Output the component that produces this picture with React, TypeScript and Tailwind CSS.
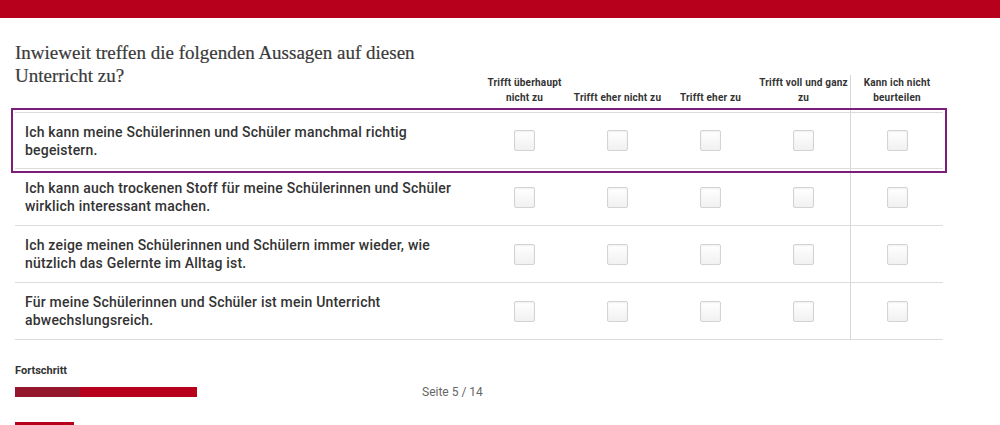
import React from 'react';

const columns: string[][] = [
  ['Trifft überhaupt', 'nicht zu'],
  ['Trifft eher nicht zu'],
  ['Trifft eher zu'],
  ['Trifft voll und ganz', 'zu'],
  ['Kann ich nicht', 'beurteilen'],
];

const statements = [
  'Ich kann meine Schülerinnen und Schüler manchmal richtig begeistern.',
  'Ich kann auch trockenen Stoff für meine Schülerinnen und Schüler wirklich interessant machen.',
  'Ich zeige meinen Schülerinnen und Schülern immer wieder, wie nützlich das Gelernte im Alltag ist.',
  'Für meine Schülerinnen und Schüler ist mein Unterricht abwechslungsreich.',
];

const Checkbox: React.FC = () => (
  <span className="block w-[21px] h-[21px] border border-[#d3d3d3] rounded-[2px] bg-gradient-to-b from-white to-[#f1f1f1] shadow-[inset_0_1px_2px_rgba(0,0,0,0.06)]" />
);

export default function App() {
  return (
    <div className="w-[1000px] h-[425px] overflow-hidden bg-white font-['Roboto',sans-serif] text-[#333]">
      {/* Top bar */}
      <div className="h-[18px] bg-[#b7001b]" />

      <div className="w-[928px] ml-[15px]">
        {/* Header */}
        <div className="grid grid-cols-[463px_repeat(5,93px)] h-[94px]">
          <h1 className="self-start pt-[23px] font-['Liberation_Serif',serif] text-[19px] leading-[23px] text-[#3a3a3a] [-webkit-text-stroke:0.2px_#3a3a3a]">
            Inwieweit treffen die folgenden Aussagen auf diesen
            <br />
            Unterricht zu?
          </h1>
          {columns.map((lines, i) => (
            <div
              key={i}
              className={`flex flex-col items-center justify-end text-center pb-[10px] text-[10px] leading-[15px] font-bold tracking-[0.2px] ${
                i === 4 ? 'border-l border-[#d6d6d6] mt-[57px]' : ''
              }`}
            >
              {lines.map((l) => (
                <span key={l} className="whitespace-nowrap">{l}</span>
              ))}
            </div>
          ))}
        </div>

        {/* Rows */}
        {statements.map((text, r) => (
          <div
            key={r}
            className={`grid grid-cols-[463px_repeat(5,93px)] border-b border-[#dcdcdc] ${
              r === 0
                ? 'h-[57px] border-t outline-2 outline-[#7b1e7a] outline-offset-2 [outline-style:solid]'
                : 'h-[57px]'
            }`}
          >
            <div className="flex items-center pl-[10px] pr-[20px] text-[14px] leading-[18px] font-medium tracking-[0.2px]">
              {text}
            </div>
            {columns.map((c, i) => (
              <div
                key={i}
                className={`flex items-center justify-center ${i === 4 ? 'border-l border-[#d6d6d6]' : ''}`}
              >
                <Checkbox />
              </div>
            ))}
          </div>
        ))}

        {/* Progress */}
        <div className="mt-[24px] text-[11px] font-bold leading-[14px]">Fortschritt</div>
        <div className="flex items-center mt-[8px] h-[12px]">
          <div className="flex w-[182px] h-[10px]">
            <div className="w-[65px] bg-[#95172c]" />
            <div className="flex-1 bg-[#b7001b]" />
          </div>
          <div className="ml-[225px] text-[12px] text-[#666]">Seite 5 / 14</div>
        </div>
        <div className="mt-[24px] w-[59px] h-[20px] bg-[#b7001b]" />
      </div>
    </div>
  );
}
